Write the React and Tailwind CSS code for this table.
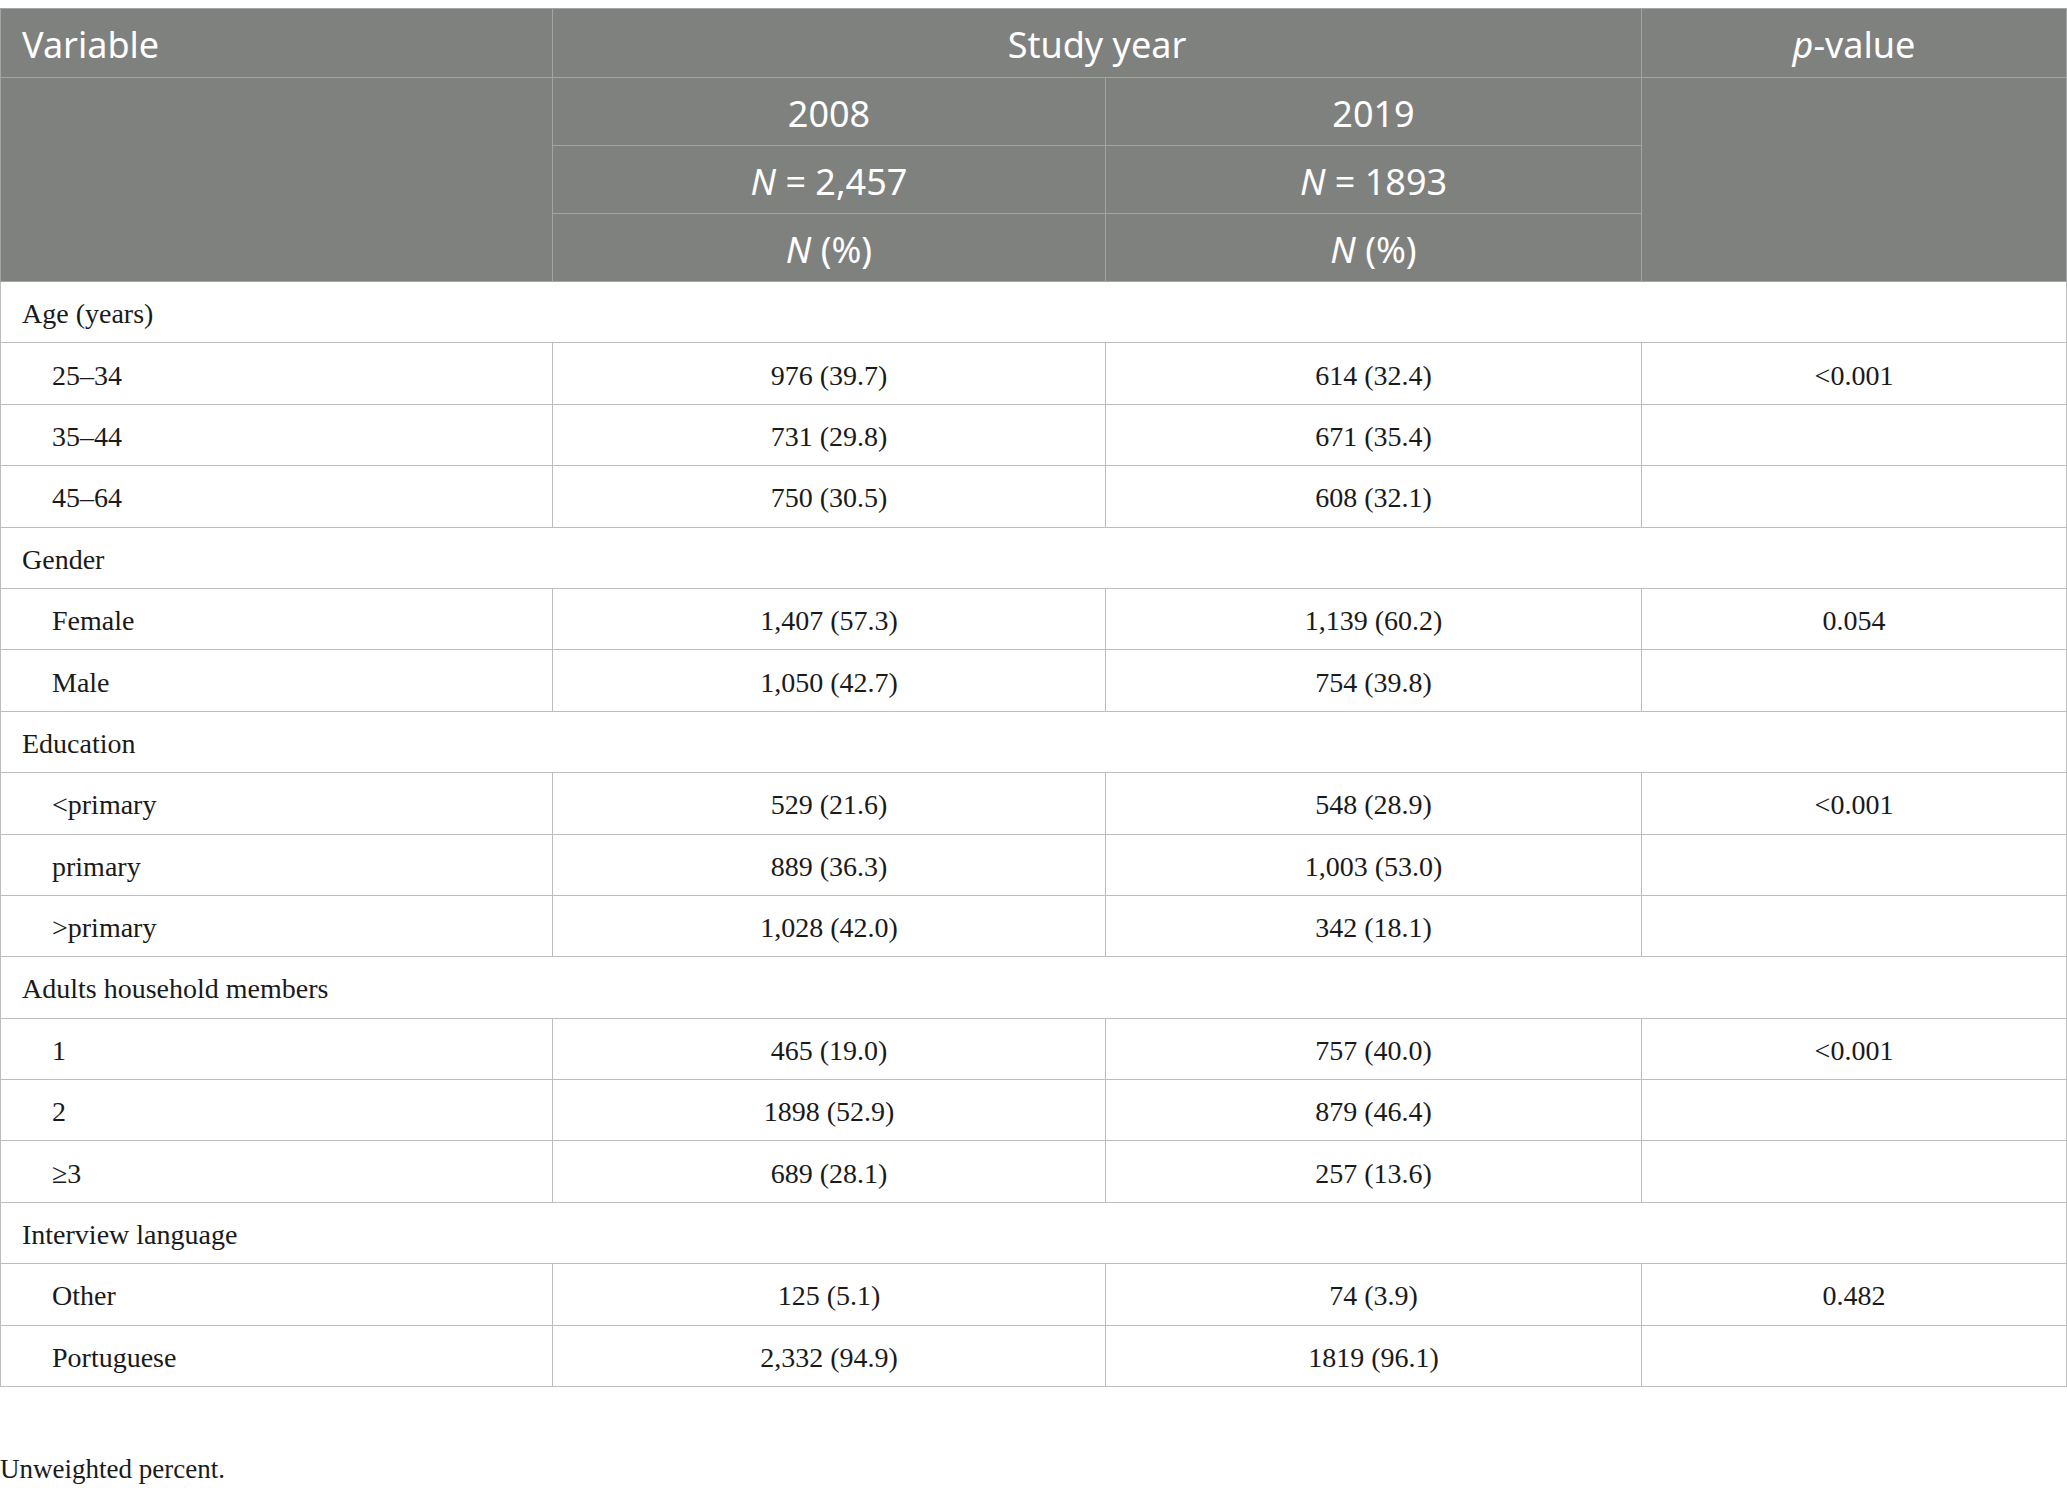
import { Fragment } from "react";

const groups = [
  {
    label: "Age (years)",
    rows: [
      ["25–34", "976 (39.7)", "614 (32.4)", "<0.001"],
      ["35–44", "731 (29.8)", "671 (35.4)", ""],
      ["45–64", "750 (30.5)", "608 (32.1)", ""],
    ],
  },
  {
    label: "Gender",
    rows: [
      ["Female", "1,407 (57.3)", "1,139 (60.2)", "0.054"],
      ["Male", "1,050 (42.7)", "754 (39.8)", ""],
    ],
  },
  {
    label: "Education",
    rows: [
      ["<primary", "529 (21.6)", "548 (28.9)", "<0.001"],
      ["primary", "889 (36.3)", "1,003 (53.0)", ""],
      [">primary", "1,028 (42.0)", "342 (18.1)", ""],
    ],
  },
  {
    label: "Adults household members",
    rows: [
      ["1", "465 (19.0)", "757 (40.0)", "<0.001"],
      ["2", "1898 (52.9)", "879 (46.4)", ""],
      ["≥3", "689 (28.1)", "257 (13.6)", ""],
    ],
  },
  {
    label: "Interview language",
    rows: [
      ["Other", "125 (5.1)", "74 (3.9)", "0.482"],
      ["Portuguese", "2,332 (94.9)", "1819 (96.1)", ""],
    ],
  },
];

const th = "border border-[#a3a5a4] h-[68px] p-0 pt-[4px] font-normal text-center align-middle";
const td = "border border-[#bdbdbd] h-[61.4px] p-0 pt-[4px] align-middle";

export default function App() {
  return (
    <div className="bg-white w-[2067px] h-[1494px] pt-[8px] text-[#1a1a1a]">
      <table className="w-full table-fixed border-collapse">
        <colgroup>
          <col className="w-[552px]" />
          <col className="w-[553px]" />
          <col className="w-[536px]" />
          <col />
        </colgroup>
        <thead className="bg-[#7f817f] text-white text-[36px] font-['Noto_Sans',sans-serif]">
          <tr>
            <th className={`${th} h-[69px] text-left pl-[21px]`}>Variable</th>
            <th className={th} colSpan={2}>Study year</th>
            <th className={th}><i>p</i>-value</th>
          </tr>
          <tr>
            <th className={th} rowSpan={3}></th>
            <th className={th}>2008</th>
            <th className={th}>2019</th>
            <th className={th} rowSpan={3}></th>
          </tr>
          <tr>
            <th className={th}><i>N</i> = 2,457</th>
            <th className={th}><i>N</i> = 1893</th>
          </tr>
          <tr>
            <th className={th}><i>N</i> (%)</th>
            <th className={th}><i>N</i> (%)</th>
          </tr>
        </thead>
        <tbody className="text-[28px] font-['Liberation_Serif',serif]">
          {groups.map((g) => (
            <Fragment key={g.label}>
              <tr>
                <td className={`${td} pl-[21px]`} colSpan={4}>{g.label}</td>
              </tr>
              {g.rows.map((r) => (
                <tr key={r[0]}>
                  <td className={`${td} pl-[51px]`}>{r[0]}</td>
                  <td className={`${td} text-center`}>{r[1]}</td>
                  <td className={`${td} text-center`}>{r[2]}</td>
                  <td className={`${td} text-center`}>{r[3]}</td>
                </tr>
              ))}
            </Fragment>
          ))}
        </tbody>
      </table>
      <p className="mt-[62px] text-[27px] font-['Liberation_Serif',serif] text-[#1a1a1a]">Unweighted percent.</p>
    </div>
  );
}
